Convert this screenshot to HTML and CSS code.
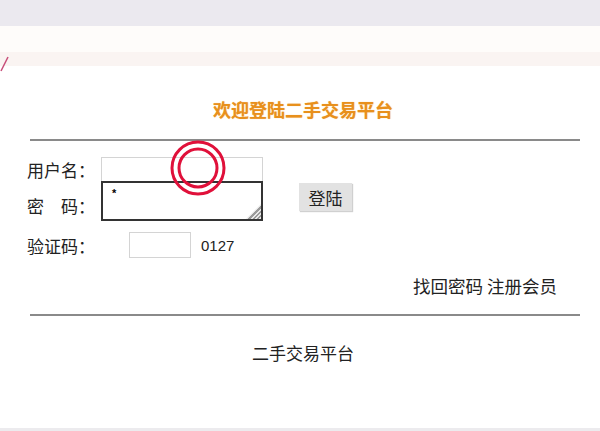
FILE: index.html
```html
<!DOCTYPE html>
<html lang="zh-CN">
<head>
<meta charset="utf-8">
<title>欢迎登陆二手交易平台</title>
<link rel="stylesheet" href="styles.css">
</head>
<body>
<div class="topbar"></div>
<div class="band"></div>
<div class="band2">
  <svg class="mark" width="10" height="18" viewBox="0 0 10 18"><path d="M8 1 L1 15" stroke="#c8507a" stroke-width="1.6" fill="none"/></svg>
</div>
<main class="page">
  <h1 class="title">欢迎登陆二手交易平台</h1>
  <hr class="rule">
  <form class="login">
    <div class="row">
      <label class="lbl">用户名：</label>
      <input class="inp user" type="text">
    </div>
    <div class="row row-pw">
      <label class="lbl lbl-pw">密　码：</label>
      <div class="pwbox"><textarea class="pw">*</textarea></div>
      <button type="button" class="btn">登陆</button>
    </div>
    <div class="row row-code">
      <label class="lbl lbl-code">验证码：</label>
      <input class="inp code" type="text">
      <span class="codeval">0127</span>
    </div>
  </form>
  <div class="links">找回密码 注册会员</div>
  <hr class="rule rule2">
  <div class="foot">二手交易平台</div>
</main>
<div class="bottombar"></div>
<svg class="cursor" width="64" height="64" viewBox="0 0 64 64">
  <circle cx="32" cy="32" r="26" fill="none" stroke="#777" stroke-width="2" opacity="0.35"/>
  <circle cx="32" cy="32" r="26" fill="none" stroke="#e0103a" stroke-width="3"/>
  <circle cx="32" cy="32" r="19" fill="none" stroke="#e0103a" stroke-width="3"/>
</svg>
</body>
</html>
```
FILE: styles.css
```css
html, body {
  margin: 0;
  padding: 0;
  background: #ffffff;
  font-family: "Noto Sans CJK SC", "Liberation Sans", sans-serif;
  color: #222;
  width: 600px;
  height: 431px;
  overflow: hidden;
  position: relative;
}
.topbar {
  height: 26px;
  background: #ebe9ef;
}
.band {
  height: 26px;
  background: #fefcfa;
}
.band2 {
  height: 14px;
  background: #faf4f2;
  position: relative;
}
.mark {
  position: absolute;
  left: 0;
  top: 4px;
}
.page {
  height: 359px;
}
.title {
  margin: 0;
  padding-top: 31px;
  height: 24px;
  line-height: 24px;
  text-align: center;
  font-size: 18px;
  font-weight: bold;
  color: #e8901c;
  text-shadow: 0 0 1px #f5c070;
  padding-left: 6px;
}
.rule {
  margin: 18px 20px 0 30px;
  border: 0;
  border-top: 2px solid #8a8a8a;
  height: 0;
}
.login {
  padding-left: 27px;
  margin-top: 16px;
  font-size: 17px;
}
.row {
  display: flex;
  align-items: center;
}
.lbl {
  width: 74px;
  line-height: 25px;
}
.inp {
  box-sizing: border-box;
  border: 1px solid #d4d4d4;
  background: #fff;
  padding: 0;
  margin: 0;
}
.user {
  width: 162px;
  height: 25px;
}
.row-pw {
  margin-top: -1px;
  align-items: flex-start;
}
.lbl-pw {
  margin-top: 12px;
}
.pwbox {
  position: relative;
  width: 162px;
  height: 40px;
}
.pwbox::after {
  content: "";
  position: absolute;
  right: 2px;
  bottom: 2px;
  width: 15px;
  height: 15px;
  background: repeating-linear-gradient(135deg, #9a9a9a 0 1.5px, #e8e8e8 1.5px 3px);
  clip-path: polygon(100% 0, 100% 100%, 0 100%);
}
.pw {
  display: block;
  box-sizing: border-box;
  width: 162px;
  height: 40px;
  border: 2px solid #333;
  margin: 0;
  padding: 5px 9px;
  font-size: 11px;
  line-height: 11px;
  resize: none;
  font-family: "Liberation Sans", sans-serif;
  font-weight: bold;
}
.btn {
  margin-left: 36px;
  margin-top: 2px;
  width: 53px;
  height: 28px;
  border: 0;
  background: #e2e2e2;
  font-family: "Noto Sans CJK SC", sans-serif;
  font-size: 17px;
  color: #222;
  padding: 0;
  box-shadow: 1px 1px 1px #d0d0d0;
}
.row-code {
  margin-top: 11px;
}
.lbl-code {
  width: 102px;
}
.code {
  width: 62px;
  height: 26px;
}
.codeval {
  margin-left: 10px;
  font-family: "Liberation Sans", sans-serif;
  font-size: 15px;
}
.links {
  text-align: right;
  padding-right: 43px;
  margin-top: 14px;
  font-size: 17.5px;
  line-height: 28px;
}
.rule2 {
  margin-top: 14px;
}
.foot {
  text-align: center;
  padding-left: 6px;
  margin-top: 23px;
  font-size: 17px;
  line-height: 28px;
}
.bottombar {
  position: absolute;
  left: 0;
  right: 0;
  bottom: 0;
  height: 3px;
  background: #ecebee;
}
.cursor {
  position: absolute;
  left: 166px;
  top: 136px;
}
```
